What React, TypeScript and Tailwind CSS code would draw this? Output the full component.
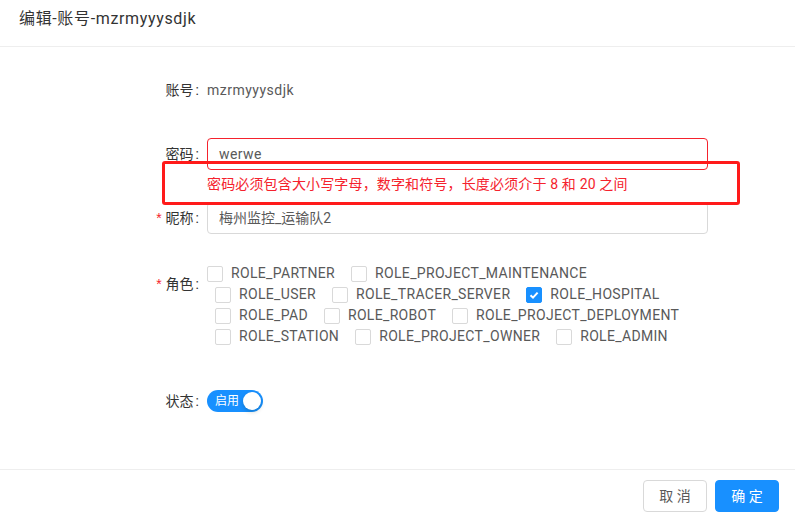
import React from "react";

const rows: { name: string; checked?: boolean }[][] = [
  [{ name: "ROLE_PARTNER" }, { name: "ROLE_PROJECT_MAINTENANCE" }],
  [{ name: "ROLE_USER" }, { name: "ROLE_TRACER_SERVER" }, { name: "ROLE_HOSPITAL", checked: true }],
  [{ name: "ROLE_PAD" }, { name: "ROLE_ROBOT" }, { name: "ROLE_PROJECT_DEPLOYMENT" }],
  [{ name: "ROLE_STATION" }, { name: "ROLE_PROJECT_OWNER" }, { name: "ROLE_ADMIN" }],
];

function Label({ text, required }: { text: string; required?: boolean }) {
  return (
    <div className="w-[207px] shrink-0 flex justify-end items-center h-[32px] text-[14px] text-[#333333]">
      {required && <span className="text-[#f5222d] mr-[4px] text-[14px] font-['Liberation_Sans',sans-serif]">*</span>}
      <span>{text}</span>
      <span className="ml-[2px] mr-[8px]">:</span>
    </div>
  );
}

function Checkbox({ checked }: { checked?: boolean }) {
  return checked ? (
    <span className="w-4 h-4 rounded-[2px] bg-[#1890ff] border border-[#1890ff] flex items-center justify-center shrink-0">
      <svg width="12" height="12" viewBox="0 0 12 12">
        <polyline points="2.5,6.2 5,8.6 9.6,3.6" fill="none" stroke="white" strokeWidth="2" />
      </svg>
    </span>
  ) : (
    <span className="w-4 h-4 rounded-[2px] bg-white border border-[#d9d9d9] shrink-0" />
  );
}

export default function App() {
  return (
    <div className="relative w-[795px] h-[515px] bg-white flex flex-col font-['Roboto','Noto_Sans_CJK_SC',sans-serif] text-[14px] text-[#595959] overflow-hidden">
      {/* header */}
      <div className="h-[47px] shrink-0 border-b border-[#eeeeee] px-[19px] pt-[7px]">
        <div className="text-[16px] leading-[24px] text-[#333333] tracking-[0.65px]">编辑-账号-mzrmyyysdjk</div>
      </div>

      {/* body */}
      <div className="flex-1 flex flex-col">
        <div className="flex items-center h-[32px] mt-[27px]">
          <Label text="账号" />
          <span className="text-[#595959] tracking-[0.5px]">mzrmyyysdjk</span>
        </div>

        <div className="flex items-center h-[32px] mt-[32px]">
          <Label text="密码" />
          <div className="w-[501px] h-[32px] border border-[#f5222d] rounded-[4px] px-[11px] flex items-center text-[#595959] tracking-[0.4px]">
            werwe
          </div>
        </div>
        <div className="pl-[207px] mt-[3px] h-[22px] leading-[22px] text-[#f5222d] tracking-[0.15px]">
          密码必须包含大小写字母，数字和符号，长度必须介于 8 和 20 之间
        </div>

        <div className="flex items-center h-[32px] mt-[7px]">
          <Label text="昵称" required />
          <div className="w-[501px] h-[32px] border border-[#d9d9d9] rounded-[4px] px-[11px] flex items-center text-[#595959]">
            梅州监控_运输队2
          </div>
        </div>

        <div className="flex items-start mt-[29px]">
          <div className="mt-[5px]">
            <Label text="角色" required />
          </div>
          <div className="flex flex-col">
            {rows.map((row, ri) => (
              <div key={ri} className="flex items-center h-[21px]">
                {row.map((item, ii) => (
                  <label
                    key={item.name}
                    className={`flex items-center ${ri === 0 && ii === 0 ? "" : "ml-2"}`}
                  >
                    <Checkbox checked={item.checked} />
                    <span className="px-2 text-[#595959] tracking-[0.33px]">{item.name}</span>
                  </label>
                ))}
              </div>
            ))}
          </div>
        </div>

        <div className="flex items-center h-[32px] mt-[38px]">
          <Label text="状态" />
          <div className="w-[56px] h-[22px] rounded-full bg-[#1890ff] flex items-center justify-between pl-[8px] pr-[2px] -mt-[1px]">
            <span className="text-white text-[12px] leading-[22px]">启用</span>
            <span className="w-[18px] h-[18px] rounded-full bg-white shadow-[0_2px_4px_rgba(0,35,11,0.2)]" />
          </div>
        </div>
      </div>

      {/* footer */}
      <div className="h-[46px] shrink-0 border-t border-[#eeeeee] flex justify-end items-start gap-2 pt-[10px] pr-[16px]">
        <button className="w-[64px] h-[32px] rounded-[4px] border border-[#d9d9d9] bg-white text-[#595959] text-[14px]">
          取 消
        </button>
        <button className="w-[64px] h-[32px] rounded-[4px] border border-[#1890ff] bg-[#1890ff] text-white text-[14px]">
          确 定
        </button>
      </div>

      {/* annotation overlay */}
      <div className="absolute left-[162px] top-[161px] w-[578px] h-[44px] border-[3px] border-[#ff1a1a] rounded-[3px] pointer-events-none" />
    </div>
  );
}
